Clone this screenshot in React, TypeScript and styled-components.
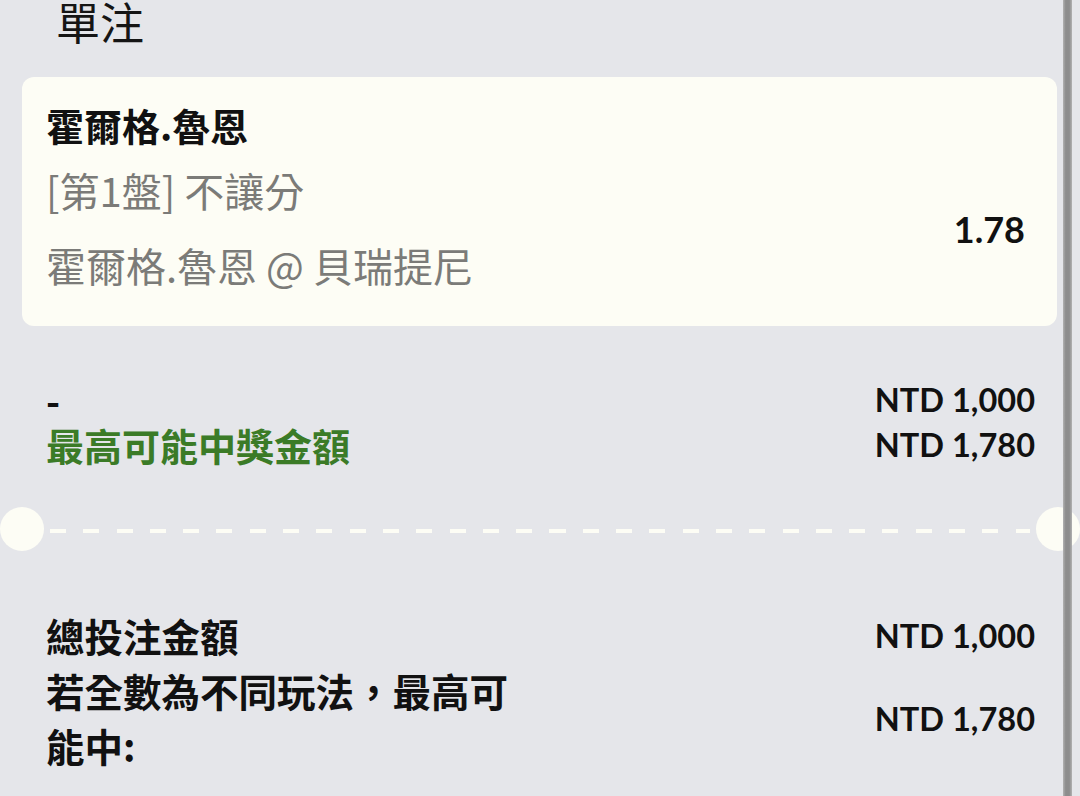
import styled, { createGlobalStyle } from "styled-components";

const GlobalStyle = createGlobalStyle`
  body {
    margin: 0;
    background: #e5e6ea;
    font-family: "Noto Sans CJK TC", "Noto Sans", sans-serif;
  }
`;

export default function App() {
  return (
    <>
      <GlobalStyle />
      <Page>
        <Title>單注</Title>

        <Card>
          <CardInfo>
            <Selection>霍爾格.魯恩</Selection>
            <Market>[第1盤] 不讓分</Market>
            <Match>霍爾格.魯恩 @ 貝瑞提尼</Match>
          </CardInfo>
          <Odds>1.78</Odds>
        </Card>

        <Summary>
          <Row>
            <Label>-</Label>
            <Amount>NTD 1,000</Amount>
          </Row>
          <Row>
            <Label $green>最高可能中獎金額</Label>
            <Amount>NTD 1,780</Amount>
          </Row>
        </Summary>

        <Divider>
          <Notch />
          <Dashes />
          <Notch />
        </Divider>

        <Totals>
          <TotalRow>
            <TotalLabel>總投注金額</TotalLabel>
            <Amount>NTD 1,000</Amount>
          </TotalRow>
          <TotalRow>
            <TotalLabel $wrap>若全數為不同玩法，最高可能中:</TotalLabel>
            <Amount>NTD 1,780</Amount>
          </TotalRow>
        </Totals>

        <Scrollbar />
      </Page>
    </>
  );
}

const Page = styled.div`
  position: relative;
  width: 1080px;
  height: 796px;
  overflow: hidden;
`;

const Title = styled.h1`
  margin: -4px 0 0;
  padding-left: 56px;
  font-size: 44px;
  line-height: 50px;
  font-weight: 400;
  color: #151515;
`;

// CARD

const Card = styled.div`
  display: flex;
  align-items: flex-start;
  justify-content: space-between;
  margin: 31px 23px 0 22px;
  padding: 25px 32px 38px 24px;
  background: #fdfdf5;
  border-radius: 12px;
`;

const CardInfo = styled.div`
  display: flex;
  flex-direction: column;
`;

const Selection = styled.div`
  font-size: 38px;
  line-height: 46px;
  font-weight: 700;
  color: #111;
`;

const Market = styled.div`
  margin-top: 19px;
  font-size: 40px;
  line-height: 46px;
  color: #7b7b78;
`;

const Match = styled(Market)`
  margin-top: 29px;
`;

const Odds = styled.div`
  margin-top: 105px;
  font-family: Lato, "Noto Sans", sans-serif;
  font-size: 36px;
  line-height: 44px;
  font-weight: 700;
  color: #111;
`;

// SUMMARY

const Summary = styled.div`
  margin-top: 51px;
  padding: 0 45px 0 46px;
`;

const Row = styled.div`
  display: flex;
  align-items: center;
  justify-content: space-between;
  height: 45px;
`;

const Label = styled.div<{ $green?: boolean }>`
  font-size: 38px;
  line-height: 45px;
  font-weight: 700;
  color: ${(p) => (p.$green ? "#3b7b27" : "#111")};
`;

const Amount = styled.div`
  font-family: Lato, "Noto Sans", sans-serif;
  font-size: 32.5px;
  line-height: 45px;
  font-weight: 700;
  color: #111;
  white-space: nowrap;
`;

// DIVIDER

const Divider = styled.div`
  display: flex;
  align-items: center;
  margin-top: 40px;
`;

const Notch = styled.div`
  flex: 0 0 44px;
  height: 44px;
  border-radius: 50%;
  background: #fdfdf5;
`;

const Dashes = styled.div`
  flex: 1;
  height: 4px;
  margin: 4px 6px 0;
  background: repeating-linear-gradient(
    90deg,
    #fdfdf5 0 16px,
    transparent 16px 33.3px
  );
`;

// TOTALS

const Totals = styled.div`
  margin-top: 56px;
  padding: 0 45px 0 46px;
`;

const TotalRow = styled.div`
  display: flex;
  align-items: center;
  justify-content: space-between;
`;

const TotalLabel = styled.div<{ $wrap?: boolean }>`
  width: 490px;
  font-size: 38.5px;
  line-height: ${(p) => (p.$wrap ? "55px" : "56px")};
  font-weight: 700;
  color: #111;
`;

const Scrollbar = styled.div`
  position: absolute;
  top: 0;
  bottom: 0;
  left: 1063px;
  width: 9px;
  background: linear-gradient(
    90deg,
    #b2b2b2,
    #8d8d8d 30%,
    #8d8d8d 70%,
    #b2b2b2
  );
`;
